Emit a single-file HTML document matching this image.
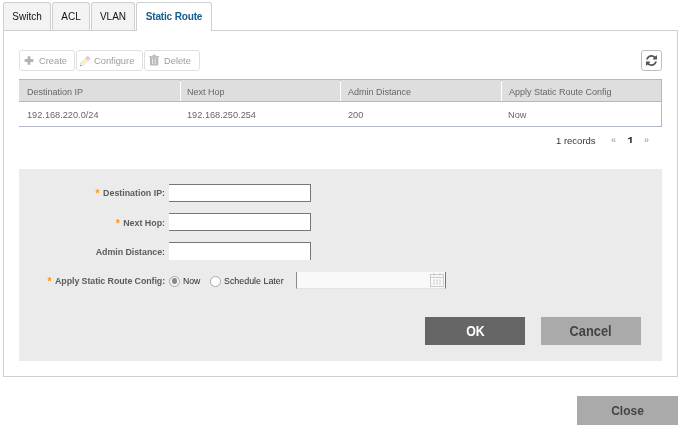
<!DOCTYPE html>
<html><head><meta charset="utf-8">
<style>
*{margin:0;padding:0;box-sizing:border-box}
html,body{width:682px;height:428px;overflow:hidden;background:#fff;font-family:"Liberation Sans",sans-serif;position:relative}
.a{position:absolute}
.tab{position:absolute;top:2px;height:29px;background:#f3f3f3;border:1px solid #cfcfcf;border-bottom:none;border-radius:3px 3px 0 0;font-size:10px;color:#111;text-align:center;line-height:28px}
.tab.act{background:#fff;color:#16608e;font-weight:bold;height:29px;font-size:10.1px;letter-spacing:-.2px}
.panel{position:absolute;left:3px;top:30px;width:675px;height:347px;border:1px solid #cfcfcf;border-top:none}
.ptop{position:absolute;left:211px;top:30px;width:467px;height:1px;background:#cfcfcf}
.pbl{position:absolute;left:3px;top:30px;width:208px;height:1px;background:#cfcfcf}
.tb{position:absolute;top:50px;height:21px;border:1px solid #e0e0e0;border-radius:3px;font-size:9.3px;color:#9c9c9c;line-height:21px;white-space:nowrap}
.th{position:absolute;top:80px;height:21px;background:#dedede;font-size:9px;color:#666;line-height:24px;white-space:nowrap}
.td{position:absolute;top:103px;font-size:9.2px;color:#666;line-height:25px;white-space:nowrap}
.form{position:absolute;left:19px;top:169px;width:643px;height:192px;background:#ebebeb}
.lbl{position:absolute;font-size:8.85px;font-weight:bold;color:#5c5c5c;white-space:nowrap;text-align:right;right:517px;line-height:12px}
.lbl b{color:#f7941d;margin-right:3.5px;font-size:10.5px;vertical-align:top;position:relative;top:-0.5px}
.inp{position:absolute;left:169px;width:142px;height:18px;background:#fff;border:1px solid #777;border-left:none}
.btn{position:absolute;font-weight:bold;text-align:center;white-space:nowrap}
</style></head><body><div style="position:absolute;left:0;top:0;width:682px;height:428px;will-change:transform">
<!-- tabs -->
<div class="tab" style="left:3px;width:48px">Switch</div>
<div class="tab" style="left:52px;width:38px">ACL</div>
<div class="tab" style="left:91px;width:44px">VLAN</div>
<div class="pbl"></div>
<div class="tab act" style="left:136px;width:76px">Static Route</div>
<div class="panel"></div>
<div class="ptop"></div>

<!-- toolbar -->
<div class="tb" style="left:19px;width:56px">
  <svg class="a" style="left:4px;top:4px" width="11" height="11" viewBox="0 0 11 11"><path d="M5 1.2v8.6M0.7 5.5h8.6" stroke="#b3b3b3" stroke-width="2.8" stroke-linecap="butt"/></svg>
  <span class="a" style="left:19px;top:0">Create</span>
</div>
<div class="tb" style="left:76px;width:67px">
  <svg class="a" style="left:2px;top:3px" width="14" height="14" viewBox="0 0 14 14"><g transform="translate(1.2,12) rotate(-45)"><path d="M0 0L3 -1.9V1.9z" fill="#fff" stroke="#c4c4c4" stroke-width=".5"/><path d="M0 0l1.1-.7v1.4z" fill="#555"/><rect x="3" y="-1.9" width="6.4" height="3.8" fill="#fbf4bd" stroke="#e6dfb0" stroke-width=".4"/><rect x="9.4" y="-1.9" width="3" height="3.8" fill="#f8bfe9" stroke="#e8b8dc" stroke-width=".4"/></g></svg>
  <span class="a" style="left:17px;top:0">Configure</span>
</div>
<div class="tb" style="left:144px;width:56px">
  <svg class="a" style="left:4px;top:3px" width="12" height="13" viewBox="0 0 12 13"><path d="M0.2 2h10v1.3H0.2z" fill="#bdbdbd"/><path d="M3.2 2.2L3.8 0.8h2.8l.6 1.4z" fill="#bdbdbd"/><path d="M1 3.2h8.3v7.6q0 .8-.8.8H1.8q-.8 0-.8-.8z" fill="#b8b8b8"/><path d="M3.6 4.6v5.6M6.2 4.6v5.6" stroke="#f4f4f4" stroke-width=".9"/></svg>
  <span class="a" style="left:19px;top:0">Delete</span>
</div>
<div class="tb" style="left:641px;width:21px;border-color:#bdbdbd">
  <svg class="a" style="left:4px;top:4px" width="11" height="11" viewBox="128 128 1536 1536"><path d="M1639 1056q0 5-1 7-64 268-268 434.5t-478 166.5q-146 0-282.5-55t-243.5-157l-129 129q-19 19-45 19t-45-19-19-45v-448q0-26 19-45t45-19h448q26 0 45 19t19 45-19 45l-137 137q71 66 161 102t187 36q134 0 250-65t186-179q11-17 53-117 8-23 30-23h192q13 0 22.5 9.5t9.5 22.5zm25-800v448q0 26-19 45t-45 19h-448q-26 0-45-19t-19-45 19-45l138-138q-148-137-349-137-134 0-250 65t-186 179q-11 17-53 117-8 23-30 23h-199q-13 0-22.5-9.5t-9.5-22.5v-7q65-268 270-434.5t480-166.5q146 0 284 55.5t245 156.5l130-129q19-19 45-19t45 19 19 45z" fill="#555"/></svg>
</div>

<!-- table -->
<div class="a" style="left:19px;top:79px;width:643px;height:48px;border:1px solid #b3b7cc;border-left:none;border-top-width:2px"></div>
<div class="th" style="left:19px;width:161px;padding-left:8px">Destination IP</div>
<div class="th" style="left:181px;width:159px;padding-left:6px">Next Hop</div>
<div class="th" style="left:341px;width:160px;padding-left:7px">Admin Distance</div>
<div class="th" style="left:502px;width:159px;padding-left:7px">Apply Static Route Config</div>
<div class="a" style="left:19px;top:101px;width:643px;height:1px;background:#b3b7cc"></div>
<div class="td" style="left:27px">192.168.220.0/24</div>
<div class="td" style="left:187px">192.168.250.254</div>
<div class="td" style="left:348px">200</div>
<div class="td" style="left:508px">Now</div>

<!-- pager -->
<div class="a" style="left:556px;top:134px;font-size:9.5px;color:#303840;line-height:13px">1 records</div>
<div class="a" style="left:611px;top:134px;font-size:9px;font-weight:bold;color:#b0b0b0;line-height:13px">&laquo;</div>
<svg class="a" style="left:627px;top:137px" width="6" height="7" viewBox="0 0 6 7"><path d="M3.9 0.1v5.8" stroke="#333" stroke-width="1.6"/><path d="M4.2 0.4L1.1 2" stroke="#333" stroke-width="1.2"/></svg>
<div class="a" style="left:644px;top:134px;font-size:9px;font-weight:bold;color:#b0b0b0;line-height:13px">&raquo;</div>

<!-- form -->
<div class="form"></div>
<div class="lbl" style="top:187px"><b>*</b>Destination IP:</div>
<div class="inp" style="top:184px"></div>
<div class="lbl" style="top:217px"><b>*</b>Next Hop:</div>
<div class="inp" style="top:213px"></div>
<div class="lbl" style="top:246px;letter-spacing:-.03px">Admin Distance:</div>
<div class="inp" style="top:242px;border-bottom:none"></div>
<div class="lbl" style="top:275px"><b>*</b><span style="letter-spacing:-.08px">Apply Static Route Config:</span></div>

<div class="a" style="left:169px;top:275.5px;width:11px;height:11px;border-radius:50%;background:#f4f4f4;border:1px solid #a8a8a8"></div>
<div class="a" style="left:171.6px;top:278.1px;width:5.5px;height:5.5px;border-radius:50%;background:#8a8a8a"></div>
<div class="a" style="left:183px;top:275px;font-size:8.7px;color:#2a2a2a;line-height:12px">Now</div>
<div class="a" style="left:210px;top:275.5px;width:11px;height:11px;border-radius:50%;background:#fff;border:1px solid #aaa"></div>
<div class="a" style="left:224px;top:275px;font-size:8.9px;color:#2a2a2a;line-height:12px">Schedule Later</div>

<div class="a" style="left:296px;top:272px;width:150px;height:17px;background:#f9f9f9;border-bottom:1px solid #e2e2e2;border-left:1px solid #8a8a8a;border-right:1px solid #777"></div>
<svg class="a" style="left:430px;top:273px" width="14" height="14" viewBox="0 0 14 14"><rect x="0.5" y="1.5" width="13" height="12" fill="none" stroke="#ccc"/><path d="M1 4.5h12" stroke="#ccc"/><path d="M4 0v3M10 0v3" stroke="#ccc"/><path d="M3 6.5h2v2H3zM6 6.5h2v2H6zM9 6.5h2v2H9zM3 9.5h2v2H3zM6 9.5h2v2H6zM9 9.5h2v2H9z" fill="#ddd"/></svg>

<div class="btn" style="left:425px;top:317px;width:100px;height:28px;background:#666;color:#fff;font-size:14px;line-height:29px"><span style="display:inline-block;transform:scaleX(.88)">OK</span></div>
<div class="btn" style="left:541px;top:317px;width:100px;height:28px;background:#aaa;color:#444;font-size:13.8px;line-height:30px"><span style="display:inline-block;transform:scaleX(.93)">Cancel</span></div>

<div class="btn" style="left:577px;top:396px;width:101px;height:29px;background:#aaa;color:#444;font-size:13.6px;line-height:29px"><span style="display:inline-block;transform:scaleX(.88)">Close</span></div>
</div></body></html>
